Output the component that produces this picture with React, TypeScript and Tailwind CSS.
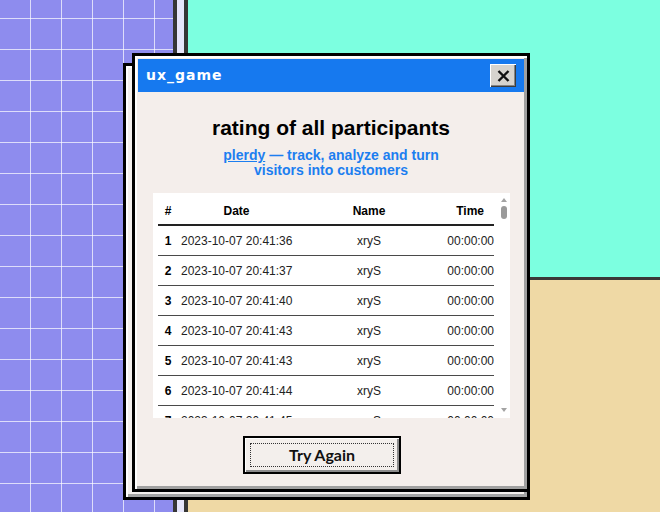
import React from "react";

const results = [
  { id: 1, date: "2023-10-07 20:41:36", name: "xryS", time: "00:00:00" },
  { id: 2, date: "2023-10-07 20:41:37", name: "xryS", time: "00:00:00" },
  { id: 3, date: "2023-10-07 20:41:40", name: "xryS", time: "00:00:00" },
  { id: 4, date: "2023-10-07 20:41:43", name: "xryS", time: "00:00:00" },
  { id: 5, date: "2023-10-07 20:41:43", name: "xryS", time: "00:00:00" },
  { id: 6, date: "2023-10-07 20:41:44", name: "xryS", time: "00:00:00" },
  { id: 7, date: "2023-10-07 20:41:45", name: "xryS", time: "00:00:00" },
  { id: 8, date: "2023-10-07 20:41:46", name: "xryS", time: "00:00:00" },
];

const cols = "grid grid-cols-[20px_117px_148px_51px] items-center";

function Desktop() {
  return (
    <div className="flex h-[512px] w-[660px]">
      {/* grid paper panel */}
      <div className="w-[173px] bg-[#8e8cee] bg-[linear-gradient(to_right,rgba(255,255,255,0.7)_1px,transparent_1px),linear-gradient(to_bottom,rgba(255,255,255,0.7)_1px,transparent_1px)] [background-size:31px_31px] [background-position:30px_18px]" />
      <div className="w-[4px] bg-[#363636]" />
      <div className="w-[7px] bg-[#e6e6fb]" />
      <div className="w-[4px] bg-[#363636]" />
      <div className="flex flex-1 flex-col">
        <div className="h-[277px] bg-[#7cffe0]" />
        <div className="h-[3px] bg-[#3a3838]" />
        <div className="flex-1 bg-[#efd9a5]" />
      </div>
    </div>
  );
}

function ScrollTrack() {
  return (
    <div className="ml-[3px] flex w-[13px] flex-col items-center pt-[5px] pb-[6px]">
      <div className="h-0 w-0 border-x-[3px] border-b-[4px] border-x-transparent border-b-[#a3a3a3]" />
      <div className="mt-[4px] h-[13px] w-[6px] rounded-full bg-[#9a9a9a]" />
      <div className="flex-1" />
      <div className="h-0 w-0 border-x-[3px] border-t-[4px] border-x-transparent border-t-[#a3a3a3]" />
    </div>
  );
}

function RatingTable() {
  return (
    <div className="ml-[15px] mt-[15px] flex h-[225px] w-[357px] self-start overflow-hidden bg-white font-['Liberation_Sans',Arial,sans-serif] text-[12px] text-[#222]">
      <div className="w-[341px] pl-[5px]">
        <div className={`${cols} h-[33px] border-b-2 border-[#222] pt-[4px] font-bold text-black`}>
          <span className="text-center">#</span>
          <span className="text-center">Date</span>
          <span className="text-center">Name</span>
          <span className="pr-[10px] text-right">Time</span>
        </div>
        {results.map((r) => (
          <div key={r.id} className={`${cols} h-[30px] border-b border-[#4a4a4a]`}>
            <span className="text-center font-bold text-black">{r.id}</span>
            <span className="pl-[3px]">{r.date}</span>
            <span className="text-center">{r.name}</span>
            <span className="text-right">{r.time}</span>
          </div>
        ))}
      </div>
      <ScrollTrack />
    </div>
  );
}

function CloseButton() {
  return (
    <button className="mr-[8px] flex h-[23px] w-[26px] items-center justify-center bg-[#d6d3ce] shadow-[inset_1px_1px_0_#ffffff,inset_-1px_-1px_0_#3c3c3c,inset_-2px_-2px_0_#848484]">
      <svg width="13" height="12" viewBox="0 0 13 12">
        <path d="M1.5 1 L11.5 11 M11.5 1 L1.5 11" stroke="#111" strokeWidth="2.4" />
      </svg>
    </button>
  );
}

function GameWindow() {
  return (
    <div className="absolute left-[123px] top-[53px] h-[447px] w-[407px]">
      {/* stacked frame behind */}
      <div className="absolute left-0 top-[10px] h-[437px] w-[407px] border-[3px] border-black bg-[#f4f0ed] shadow-[inset_2px_2px_0_#ffffff,inset_-3px_-3px_0_#a4a4a4]" />

      <div className="relative ml-[9px] flex h-[439px] w-[398px] flex-col border-[3px] border-black bg-[#f4eeeb] p-[3px] shadow-[inset_2px_2px_0_#ffffff,inset_-3px_-3px_0_#a0a0a0]">
        <div className="flex h-[33px] items-center justify-between bg-[#1679ef] pl-[8px]">
          <span className="font-['DejaVu_Sans',Verdana,sans-serif] text-[14px] font-bold tracking-[1px] text-white">
            ux_game
          </span>
          <CloseButton />
        </div>

        <div className="flex flex-1 flex-col items-center">
          <h1 className="mt-[24px] font-['Liberation_Sans',Arial,sans-serif] text-[21px] font-bold leading-[24px] text-black">
            rating of all participants
          </h1>
          <p className="mt-[8px] text-center font-['Liberation_Sans',Arial,sans-serif] text-[14px] font-bold leading-[15px] text-[#1c7ef0]">
            <span className="underline">plerdy</span> — track, analyze and turn
            <br />
            visitors into customers
          </p>

          <RatingTable />

          <button className="mt-[18px] ml-[105px] h-[38px] w-[158px] self-start border-2 border-black bg-[#f3efec] p-[5px] shadow-[inset_1px_1px_0_#ffffff,inset_-2px_-2px_0_#8c8c8c]">
            <span className="flex h-full w-full items-center justify-center border border-dotted border-[#333] font-['Lato',sans-serif] text-[16px] font-bold text-[#111]">
              Try Again
            </span>
          </button>
        </div>
      </div>
    </div>
  );
}

export default function App() {
  return (
    <div className="relative h-[512px] w-[660px] overflow-hidden">
      <Desktop />
      <GameWindow />
    </div>
  );
}
